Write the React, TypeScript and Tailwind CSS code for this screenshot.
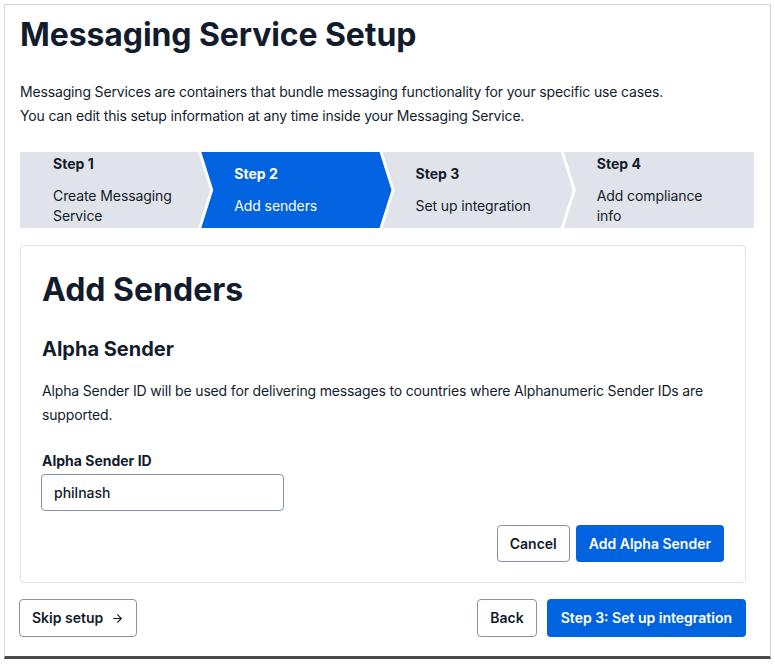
import { ArrowRight } from 'lucide-react';

type Step = { label: string; title: string; active?: boolean };

const steps: Step[] = [
  { label: 'Step 1', title: 'Create Messaging Service' },
  { label: 'Step 2', title: 'Add senders', active: true },
  { label: 'Step 3', title: 'Set up integration' },
  { label: 'Step 4', title: 'Add compliance info' },
];

// chevron shapes for the wizard
const shapes = [
  '[clip-path:polygon(0_0,calc(100%-12px)_0,100%_50%,calc(100%-12px)_100%,0_100%)]',
  '[clip-path:polygon(0_0,calc(100%-12px)_0,100%_50%,calc(100%-12px)_100%,0_100%,12px_50%)]',
  '[clip-path:polygon(0_0,calc(100%-12px)_0,100%_50%,calc(100%-12px)_100%,0_100%,12px_50%)]',
  '[clip-path:polygon(0_0,100%_0,100%_100%,0_100%,12px_50%)]',
];

const Stepper = () => (
  <div className="flex w-[734px] h-[76px]">
    {steps.map((step, i) => (
      <div
        key={step.label}
        className={`flex-1 flex flex-col justify-center pl-[33px] pr-6 ${i > 0 ? '-ml-[9px]' : ''} ${shapes[i]} ${
          step.active ? 'bg-[#0263e0] text-white' : 'bg-[#e1e3ea] text-[#121c2d]'
        }`}
      >
        <div className="text-sm font-bold leading-5">{step.label}</div>
        <div className="text-sm leading-5 mt-3 tracking-[-0.1px]">{step.title}</div>
      </div>
    ))}
  </div>
);

const App = () => {
  return (
    <div className="w-[775px] h-[665px] bg-white overflow-hidden font-['Inter',sans-serif] text-[#121c2d]">
      <div className="ml-[4px] mt-[4px] w-[767px] h-[655px] border border-[#d6d6d6] border-b-[3px] border-b-[#4a4a4a] pl-[15px] pt-[10px]">
        <h1 className="text-[32px] font-bold leading-10 tracking-[-0.1px]">Messaging Service Setup</h1>

        <p className="mt-[25px] text-sm leading-6 tracking-[-0.16px]">
          Messaging Services are containers that bundle messaging functionality for your specific use cases.
          <br />
          You can edit this setup information at any time inside your Messaging Service.
        </p>

        <div className="mt-6">
          <Stepper />
        </div>

        <div className="mt-[17px] w-[726px] h-[338px] border border-[#e1e3ea] rounded px-[21px] pt-[24px]">
          <h2 className="text-[32px] font-bold leading-10">Add Senders</h2>

          <h3 className="mt-[25px] text-xl font-bold leading-7">Alpha Sender</h3>

          <p className="mt-[16px] text-sm leading-6 tracking-[-0.16px]">
            Alpha Sender ID will be used for delivering messages to countries where Alphanumeric Sender IDs are
            supported.
          </p>

          <label className="block mt-[24px] text-sm font-bold leading-5">Alpha Sender ID</label>
          <input
            defaultValue="philnash"
            className="mt-[3px] w-[243px] h-[37px] -ml-px border border-[#8891aa] rounded px-3 text-sm font-medium outline-none"
          />

          <div className="flex justify-end gap-[6px] mt-[14px]">
            <button className="h-[37px] px-3 border border-[#8891aa] rounded text-sm font-semibold">Cancel</button>
            <button className="h-[37px] px-[13px] bg-[#0263e0] text-white rounded text-sm font-semibold">
              Add Alpha Sender
            </button>
          </div>
        </div>

        <div className="flex items-center w-[727px] -ml-px mt-[16px]">
          <button className="h-[38px] px-3 border border-[#8891aa] rounded text-sm font-semibold flex items-center gap-2">
            Skip setup <ArrowRight size={13} strokeWidth={2} />
          </button>
          <div className="ml-auto flex gap-[10px]">
            <button className="h-[38px] px-3 border border-[#8891aa] rounded text-sm font-semibold">Back</button>
            <button className="h-[38px] px-[14px] bg-[#0263e0] text-white rounded text-sm font-semibold">
              Step 3: Set up integration
            </button>
          </div>
        </div>
      </div>
    </div>
  );
};

export default App;
